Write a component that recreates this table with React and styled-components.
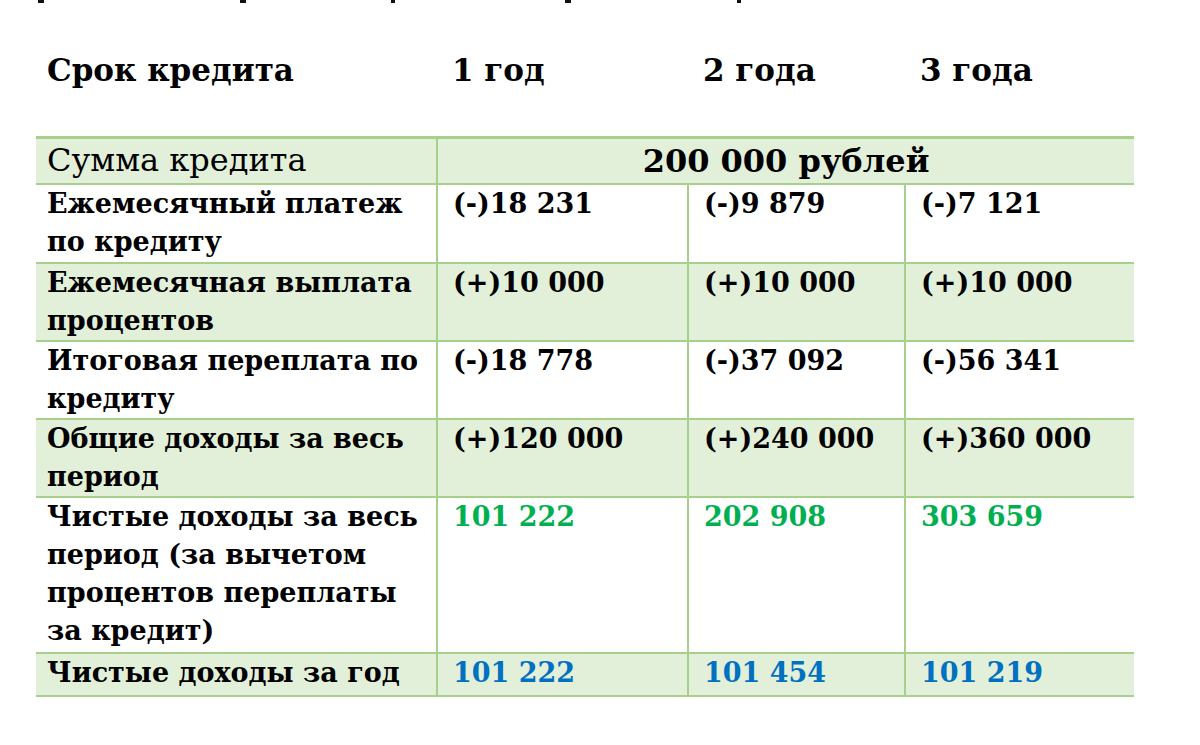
import React from 'react';
import styled, { createGlobalStyle } from 'styled-components';

const GlobalStyle = createGlobalStyle`
  body {
    margin: 0;
    background: #ffffff;
    font-family: "DejaVu Serif", "Liberation Serif", serif;
    color: #000000;
  }
`

const Page = styled.div`
  width: 1200px;
  height: 745px;
  overflow: hidden;
`

const CutLine = styled.svg`
  display: block;
  width: 1200px;
  height: 4px;
`

const HeadRow = styled.div`
  display: grid;
  grid-template-columns: 401px 251px 217px 229px;
  margin: 40px 0 0 36px;
  height: 92px;
`

const HeadCell = styled.div`
  padding-left: ${(props) => props.pad || 15}px;
  font-size: 31px;
  font-weight: bold;
  line-height: 52px;
`

const Table = styled.table`
  margin-left: 36px;
  width: 1098px;
  border-collapse: collapse;
  table-layout: fixed;
  border-top: 3px solid #a8d08d;
  border-bottom: 2px solid #a8d08d;
`

const Row = styled.tr`
  background: ${(props) => (props.shade ? '#e2efd9' : '#ffffff')};
  height: ${(props) => props.h}px;
  border-top: 2px solid #a8d08d;
`

const Cell = styled.td`
  vertical-align: top;
  padding: 0 6px 0 ${(props) => (props.first ? 11 : 15)}px;
  border-left: ${(props) => (props.first ? 'none' : '2px solid #a8d08d')};
  font-size: 27px;
  font-weight: bold;
  line-height: 38px;
  color: ${(props) => props.color || '#000000'};
`

const SumLabel = styled.td`
  vertical-align: top;
  padding: 0 11px;
  font-size: 32px;
  font-weight: normal;
  line-height: 42px;
`

const SumValue = styled.td`
  border-left: 2px solid #a8d08d;
  text-align: center;
  vertical-align: top;
  font-size: 32px;
  font-weight: bold;
  line-height: 42px;
`

const GREEN = '#00b050'
const BLUE = '#0070c0'

const rows = [
  { label: 'Ежемесячный платеж по кредиту', values: ['(-)18 231', '(-)9 879', '(-)7 121'], h: 79 },
  { label: 'Ежемесячная выплата процентов', values: ['(+)10 000', '(+)10 000', '(+)10 000'], h: 76, shade: true },
  { label: 'Итоговая переплата по кредиту', values: ['(-)18 778', '(-)37 092', '(-)56 341'], h: 76 },
  { label: 'Общие доходы за весь период', values: ['(+)120 000', '(+)240 000', '(+)360 000'], h: 76, shade: true },
  { label: 'Чистые доходы за весь период (за вычетом процентов переплаты за кредит)', values: ['101 222', '202 908', '303 659'], h: 156, color: GREEN },
  { label: 'Чистые доходы за год', values: ['101 222', '101 454', '101 219'], h: 43, shade: true, color: BLUE },
]

const cutMarks = [[38, 6], [240, 6], [391, 4], [565, 6], [737, 4]]

const App = () => {
  return (
    <Page>
      <GlobalStyle />
      <CutLine viewBox="0 0 1200 4">
        {cutMarks.map(([x, w]) => (
          <rect key={x} x={x} y={0} width={w} height={3} fill="#111" />
        ))}
      </CutLine>
      <HeadRow>
        <HeadCell pad={11}>Срок кредита</HeadCell>
        <HeadCell>1 год</HeadCell>
        <HeadCell>2 года</HeadCell>
        <HeadCell>3 года</HeadCell>
      </HeadRow>
      <Table>
        <colgroup>
          <col style={{ width: 401 }} />
          <col style={{ width: 251 }} />
          <col style={{ width: 217 }} />
          <col style={{ width: 229 }} />
        </colgroup>
        <tbody>
          <Row shade h={42}>
            <SumLabel>Сумма кредита</SumLabel>
            <SumValue colSpan={3}>200 000 рублей</SumValue>
          </Row>
          {rows.map((r) => (
            <Row key={r.label} shade={r.shade} h={r.h}>
              <Cell first>{r.label}</Cell>
              {r.values.map((v, i) => (
                <Cell key={i} color={r.color}>{v}</Cell>
              ))}
            </Row>
          ))}
        </tbody>
      </Table>
    </Page>
  );
};

export default App;
